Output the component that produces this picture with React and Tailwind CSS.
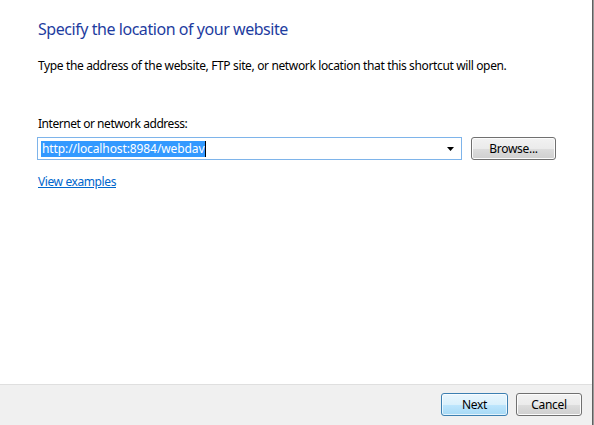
// Add-network-location wizard page: main instruction, address combo, footer buttons
const FONT = { fontFamily: '"Noto Sans", "Open Sans", sans-serif' };

function AeroButton({ children, primary = false, className = "" }) {
  return (
    <button
      type="button"
      className={
        "h-[23px] rounded-[3px] border text-[12px] leading-none tracking-[-0.3px] text-black " +
        (primary
          ? "border-[#3c7fb1] bg-[linear-gradient(#eaf6fd_0%,#d9f0fc_50%,#bee6fd_50%,#a7d9f5_100%)] shadow-[inset_0_0_0_1px_#ffffffb0] "
          : "border-[#707070] bg-[linear-gradient(#f2f2f2_0%,#ebebeb_50%,#dddddd_50%,#cfcfcf_100%)] shadow-[inset_0_0_0_1px_#fcfcfc] ") +
        className
      }
    >
      {children}
    </button>
  );
}

export default function App() {
  return (
    <div className="w-[594px] h-[425px] flex bg-white overflow-hidden" style={FONT}>
      <div className="flex-1 flex flex-col">
        {/* Page body */}
        <div className="flex-1 pl-[38px] pr-[36px] pt-[18px]">
          <h1 className="text-[16px] leading-[22px] tracking-[-0.45px] text-[#1e3ca0]">Specify the location of your website</h1>
          <p className="mt-[18px] text-[12px] leading-[16px] tracking-[-0.36px] text-black">
            Type the address of the website, FTP site, or network location that this shortcut will open.
          </p>

          <label className="block mt-[42px] text-[12px] leading-[16px] tracking-[-0.45px] text-black">Internet or network address:</label>
          <div className="mt-[5px] flex items-center">
            <div className="w-[425px] h-[23px] -ml-[1px] border border-[#7eb4ea] bg-white flex items-center pl-[3px] pr-[6px]">
              <div className="flex-1 flex items-center">
                <span className="bg-[#3399ff] text-white text-[12px] leading-[16px] tracking-[-0.1px] px-[1px]">http://localhost:8984/webdav</span>
                <span className="w-[1px] h-[16px] bg-black" />
              </div>
              <svg width="7" height="4" viewBox="0 0 7 4" className="mr-[1px]">
                <path d="M0 0h7L3.5 4z" fill="#000" />
              </svg>
            </div>
            <AeroButton className="ml-[9px] w-[85px]">Browse...</AeroButton>
          </div>

          <a href="#" className="inline-block mt-[14px] text-[12px] leading-[16px] tracking-[-0.4px] text-[#0066cc] underline">View examples</a>
        </div>

        {/* Footer with wizard navigation */}
        <div className="h-[41px] border-t border-[#dfdfdf] bg-[#f0f0f0] flex items-center justify-end pr-[10px] pb-[1px]">
          <AeroButton primary className="w-[67px]">Next</AeroButton>
          <AeroButton className="ml-[8px] w-[66px]">Cancel</AeroButton>
        </div>
      </div>
      <div className="w-[2px] bg-[linear-gradient(90deg,#5f5f5f_50%,#9a9a9a_50%)]" />
    </div>
  );
}
